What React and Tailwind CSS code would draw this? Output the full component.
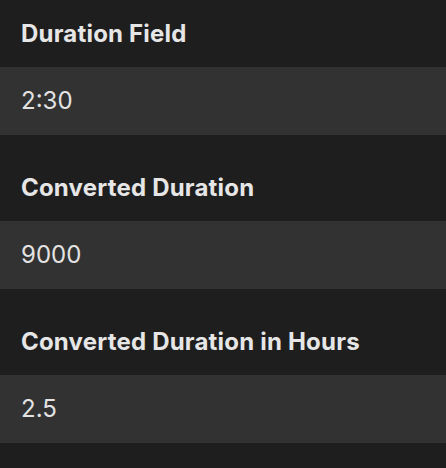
const fields = [
  { label: 'Duration Field', value: '2:30' },
  { label: 'Converted Duration', value: '9000' },
  { label: 'Converted Duration in Hours', value: '2.5' },
];

export default function App() {
  return (
    <div className="h-[468px] w-[446px] overflow-hidden bg-[#1e1e1e] font-['Inter',sans-serif] text-[#e6e6e6]">
      {fields.map((field) => (
        <div key={field.label} className="mb-[19px]">
          <div className="flex h-[67px] items-center px-[21px] text-[24px] font-bold tracking-[0.2px]">
            {field.label}
          </div>
          <div className="flex h-[68px] items-center bg-[#323232] px-[21px] text-[24px] text-[#e3e3e3]">
            {field.value}
          </div>
        </div>
      ))}
    </div>
  );
}
